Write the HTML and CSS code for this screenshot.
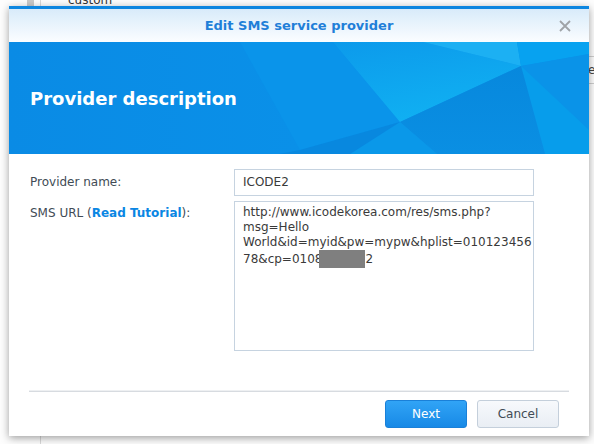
FILE: index.html
```html
<!DOCTYPE html>
<html>
<head>
<meta charset="utf-8">
<link rel="stylesheet" href="styles.css">
</head>
<body>
<div class="desk">
  <div class="bg-block"></div>
  <div class="bg-vline"></div>
  <div class="bg-text">custom</div>
  <div class="bg-right">
    <div class="bg-rline"></div>
    <div class="bg-rtext">Name</div>
    <div class="bg-rline"></div>
  </div>

  <div class="dialog">
    <div class="titlebar">
      <span class="title">Edit SMS service provider</span>
      <svg class="close" width="12" height="12" viewBox="0 0 12 12"><path d="M1 1L11 11M11 1L1 11" stroke="#9fa3a7" stroke-width="1.8" fill="none"/></svg>
    </div>
    <div class="banner">
      <svg class="banner-art" width="580" height="112" viewBox="0 0 580 112" preserveAspectRatio="none">
        <defs>
          <linearGradient id="gbase" x1="0" y1="0" x2="1" y2="0">
            <stop offset="0" stop-color="#0a8be5"/>
            <stop offset="0.5" stop-color="#0a90e8"/>
            <stop offset="1" stop-color="#0a95ea"/>
          </linearGradient>
          <linearGradient id="gband" x1="0" y1="0" x2="0.4" y2="1">
            <stop offset="0" stop-color="#0c9aeb"/>
            <stop offset="1" stop-color="#10b0f2"/>
          </linearGradient>
          <linearGradient id="gdark" x1="0" y1="0" x2="0" y2="1">
            <stop offset="0" stop-color="#0788dd"/>
            <stop offset="1" stop-color="#0a8fe3"/>
          </linearGradient>
        </defs>
        <rect width="580" height="112" fill="url(#gbase)"/>
        <polygon points="231,0 324,0 391,80 291,108" fill="#0a94ea"/>
        <polygon points="324,0 414,0 512,24 391,80" fill="url(#gband)"/>
        <polygon points="414,0 508,0 512,24" fill="#1cb0f3"/>
        <polygon points="508,0 580,0 580,12 512,24" fill="#07a2f0"/>
        <polygon points="512,24 580,12 580,88" fill="#0a93e8"/>
        <polygon points="512,24 580,88 580,112 536,112" fill="#079deb"/>
        <polygon points="512,24 536,112 428,112 391,80" fill="url(#gdark)"/>
        <polygon points="391,80 428,112 341,112" fill="#0a98e9"/>
        <polygon points="291,108 391,80 341,112 270,112" fill="#0888df"/>
      </svg>
      <h1 class="banner-title">Provider description</h1>
    </div>
    <div class="form">
      <div class="label label-single">Provider name:</div>
      <div class="input">ICODE2</div>
      <div class="label label-multi">SMS URL (<span class="link">Read Tutorial</span>):</div>
      <div class="textarea">http://www.icodekorea.com/res/sms.php?<br>msg=Hello<br>World&amp;id=myid&amp;pw=mypw&amp;hplist=010123456<br>78&amp;cp=0108<span class="redact"></span>2</div>
    </div>
    <div class="footer">
      <button class="btn btn-primary">Next</button>
      <button class="btn btn-default">Cancel</button>
    </div>
  </div>
</div>
</body>
</html>
```
FILE: styles.css
```css
html, body {
  margin: 0;
  padding: 0;
}
body {
  width: 594px;
  height: 444px;
  overflow: hidden;
  background: #ffffff;
  font-family: "DejaVu Sans", Verdana, sans-serif;
  font-size: 12px;
}
.desk {
  position: relative;
  width: 594px;
  height: 444px;
  overflow: hidden;
  background: #fdfdfd;
}
.bg-block {
  position: absolute;
  left: 27px;
  top: 0;
  width: 7px;
  height: 10px;
  background: #c9c9c9;
}
.bg-vline {
  position: absolute;
  left: 40px;
  top: 0;
  width: 1px;
  height: 444px;
  background: #d9d9d9;
}
.bg-text {
  position: absolute;
  left: 68px;
  top: -6px;
  font-size: 12px;
  line-height: 12px;
  color: #333;
}
.bg-right {
  position: absolute;
  left: 560px;
  top: 56px;
  width: 40px;
}
.bg-rline {
  height: 1px;
  background: #cfcfcf;
}
.bg-rtext {
  height: 26px;
  line-height: 26px;
  color: #444;
  font-size: 12px;
}
.dialog {
  position: relative;
  margin: 6px 0 0 9px;
  width: 580px;
  height: 430px;
  background: #fff;
  box-shadow: 0 2px 8px rgba(0, 0, 0, 0.38);
  display: flex;
  flex-direction: column;
}
.titlebar {
  height: 33px;
  border-top: 3px solid #0d86e0;
  background: linear-gradient(to bottom, #d8ebfa, #fbfdff);
  display: flex;
  align-items: center;
  justify-content: center;
  position: relative;
}
.title {
  font-weight: bold;
  font-size: 13px;
  color: #1f7fd8;
}
.close {
  position: absolute;
  right: 18px;
  top: 11px;
}
.banner {
  position: relative;
  height: 112px;
  display: flex;
  align-items: center;
  padding-left: 21px;
  overflow: hidden;
}
.banner-art {
  position: absolute;
  left: 0;
  top: 0;
}
.banner-title {
  position: relative;
  margin: 0;
  font-size: 18px;
  font-weight: bold;
  color: #fff;
}
.form {
  display: grid;
  grid-template-columns: 204px 300px;
  grid-template-rows: 27px 150px;
  align-content: start;
  row-gap: 5px;
  padding: 15px 0 0 21px;
  height: 222px;
  color: #414b55;
}
.label-single {
  line-height: 27px;
}
.label-multi {
  padding-top: 5px;
  line-height: 15px;
}
.link {
  color: #0a86e3;
  font-weight: bold;
}
.input {
  box-sizing: border-box;
  height: 27px;
  border: 1px solid #c6d3e0;
  padding: 0 8px;
  line-height: 25px;
  color: #3a3a3a;
}
.textarea {
  box-sizing: border-box;
  height: 150px;
  border: 1px solid #c6d3e0;
  padding: 3px 8px;
  line-height: 15px;
  color: #3a3a3a;
  white-space: nowrap;
  overflow: hidden;
}
.redact {
  display: inline-block;
  width: 46px;
  height: 18px;
  margin-left: -3px;
  margin-right: 0;
  vertical-align: -5px;
  background: #7f7f7f;
}
.footer {
  margin: 0 20px;
  border-top: 1px solid #d7dbe0;
  box-shadow: 0 -1px 0 #eef0f2;
  padding: 8px 10px 0 0;
  display: flex;
  justify-content: flex-end;
  gap: 10px;
}
.btn {
  box-sizing: border-box;
  width: 82px;
  height: 28px;
  border-radius: 3px;
  font-family: "DejaVu Sans", Verdana, sans-serif;
  font-size: 12px;
  padding: 0;
}
.btn-primary {
  background: linear-gradient(to bottom, #31a4f6, #1789e6);
  border: 1px solid #1a80d8;
  color: #fff;
}
.btn-default {
  background: linear-gradient(to bottom, #f7f9fc, #e9eef4);
  border: 1px solid #c4cfdb;
  color: #414b55;
}
```
